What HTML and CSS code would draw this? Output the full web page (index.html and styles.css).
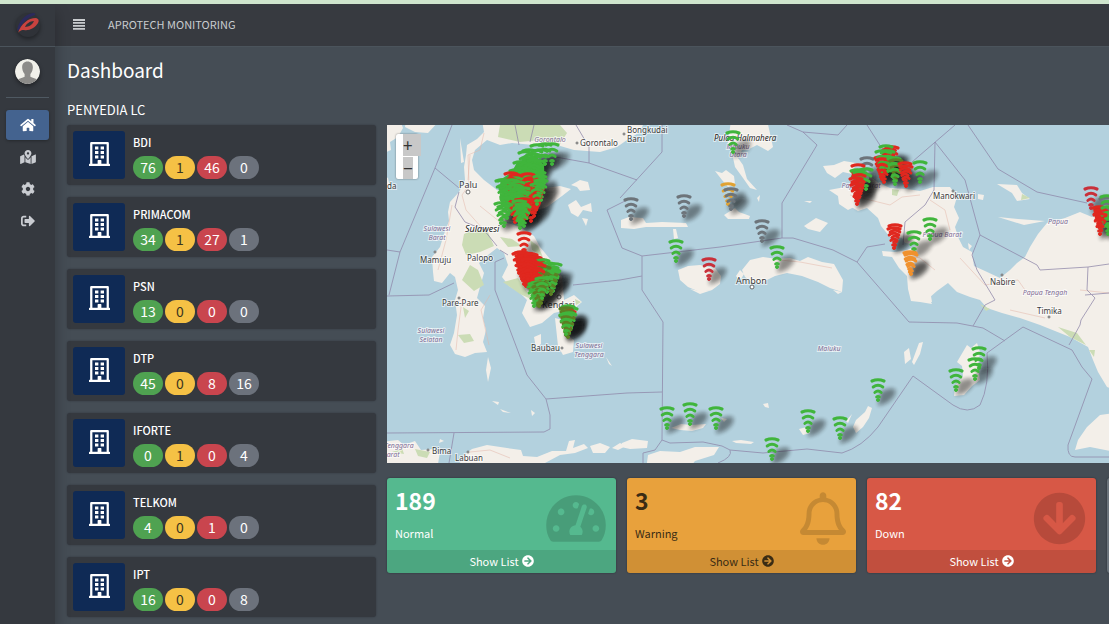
FILE: index.html
```html
<!DOCTYPE html>
<html lang="id">
<head>
<meta charset="UTF-8">
<meta name="viewport" content="width=device-width, initial-scale=1">
<title>Aprotech Monitoring</title>
<link rel="stylesheet" href="styles.css">
</head>
<body>

<svg class="sprite" aria-hidden="true">
  <symbol id="i-building" viewBox="0 0 448 512">
    <path fill-rule="evenodd" d="M24 24Q24 0 48 0H400Q424 0 424 24V464H436Q448 464 448 476V512H0V476Q0 464 12 464H24ZM72 48V464H184V396Q184 384 196 384H252Q264 384 264 396V464H376V48Z"/>
    <path d="M128 96h72v64h-72zM248 96h72v64h-72zM128 192h72v64h-72zM248 192h72v64h-72zM128 288h72v64h-72zM248 288h72v64h-72z"/>
  </symbol>
  <symbol id="i-arrow" viewBox="0 0 512 512">
    <path d="M256 8c137 0 248 111 248 248S393 504 256 504 8 393 8 256 119 8 256 8zm-28.900 143.600l75.500 72.400H120c-13.300 0-24 10.700-24 24v16c0 13.300 10.700 24 24 24h182.600l-75.500 72.400c-9.700 9.300-9.900 24.800-.4 34.300l11 10.900c9.400 9.400 24.600 9.400 33.900 0L404.300 273c9.400-9.400 9.400-24.600 0-33.900L271.600 106.300c-9.400-9.400-24.600-9.400-33.900 0l-11 10.900c-9.500 9.600-9.300 25.100.4 34.400z"/>
  </symbol>
</svg>

<div class="wrapper">
  <aside class="sidebar">
    <a href="#" class="brand" aria-label="Aprotech">
      <svg viewBox="0 0 26 26" width="26" height="26">
        <circle cx="13" cy="13" r="12" fill="#2f3238"/>
        <path d="M2 19C3 10 10 2 18 1Q21 1 20 3C13 5 7 11 5 17Z" fill="#2b2a5c"/>
        <path fill-rule="evenodd" d="M3 21C6 12 13 6 21 6Q25 7 23 11C20 16 14 19 9 18C5 18 4 20 3 21ZM10 15C14 15 18 12 19 9C15 9 11 12 10 15Z" fill="#c8423f"/>
      </svg>
    </a>
    <div class="user">
      <svg viewBox="0 0 26 26" width="25" height="25">
        <clipPath id="face"><circle cx="13" cy="13" r="13"/></clipPath>
        <g clip-path="url(#face)">
          <path fill="#f1f0ea" d="M0 0h26v26H0z"/>
          <path fill="#8c8b89" d="M13 2.500c4 0 6 3 5.500 7-.3 3-1.500 5-2.500 6v3c2 1 6 1.500 8 4v4H2v-4c2-2.500 6-3 8-4v-3c-1-1-2.200-3-2.500-6-.5-4 1.500-7 5.500-7z"/>
        </g>
      </svg>
    </div>
    <nav class="menu">
      <a href="#" class="active" aria-label="Dashboard"><svg viewBox="0 0 576 512" width="16" height="14"><path d="M280.370 148.260L96 300.110V464a16 16 0 0 0 16 16l112.060-.29a16 16 0 0 0 15.920-16V368a16 16 0 0 1 16-16h64a16 16 0 0 1 16 16v95.640a16 16 0 0 0 16 16.050L464 480a16 16 0 0 0 16-16V300L295.670 148.260a12.190 12.190 0 0 0-15.300 0zM571.600 251.470L488 182.560V44.050a12 12 0 0 0-12-12h-56a12 12 0 0 0-12 12v72.610L318.470 43a48 48 0 0 0-61 0L4.340 251.470a12 12 0 0 0-1.600 16.900l25.500 31A12 12 0 0 0 45.150 301l235.220-193.740a12.190 12.190 0 0 1 15.300 0L530.900 301a12 12 0 0 0 16.900-1.600l25.500-31a12 12 0 0 0-1.700-16.930z"/></svg></a>
      <a href="#" aria-label="Map"><svg viewBox="0 0 576 512" width="16" height="14"><path d="M288 0c-69.590 0-126 56.410-126 126 0 56.260 82.350 158.800 113.900 196.020 6.390 7.540 17.820 7.540 24.200 0C331.650 284.800 414 182.260 414 126 414 56.410 357.590 0 288 0zm0 168c-23.200 0-42-18.800-42-42s18.800-42 42-42 42 18.800 42 42-18.800 42-42 42zM20.120 215.950A32.006 32.006 0 0 0 0 245.660v250.320c0 11.320 11.430 19.060 21.940 14.860L160 448V214.920c-8.840-15.980-16.070-31.540-21.250-46.420L20.120 215.950zM288 359.670c-14.070 0-27.380-6.180-36.510-16.960-19.660-23.200-40.570-49.620-59.490-76.720v182l192 64V266c-18.920 27.090-39.820 53.520-59.490 76.720-9.130 10.770-22.440 16.950-36.510 16.950zm266.060-198.510L416 224v288l139.880-55.950A31.996 31.996 0 0 0 576 426.340V176.020c0-11.320-11.430-19.060-21.940-14.860z"/></svg></a>
      <a href="#" aria-label="Settings"><svg viewBox="0 0 512 512" width="14" height="14"><path d="M487.400 315.700l-42.600-24.600c4.300-23.200 4.300-47 0-70.200l42.600-24.600c4.900-2.800 7.100-8.600 5.500-14-11.100-35.600-30-67.800-54.700-94.600-3.800-4.100-10-5.100-14.800-2.300L380.800 110c-17.900-15.400-38.500-27.300-60.800-35.100V25.800c0-5.600-3.900-10.500-9.400-11.700-36.700-8.200-74.300-7.800-109.200 0-5.500 1.200-9.400 6.100-9.400 11.700V75c-22.200 7.900-42.800 19.800-60.800 35.100L88.700 85.500c-4.900-2.800-11-1.900-14.800 2.300-24.700 26.700-43.600 58.900-54.700 94.600-1.700 5.400.6 11.200 5.500 14L67.300 221c-4.300 23.200-4.300 47 0 70.200l-42.600 24.600c-4.900 2.800-7.100 8.600-5.500 14 11.100 35.600 30 67.800 54.700 94.600 3.800 4.100 10 5.100 14.800 2.300l42.600-24.600c17.900 15.400 38.500 27.300 60.800 35.100v49.200c0 5.600 3.900 10.500 9.400 11.700 36.700 8.200 74.300 7.800 109.200 0 5.500-1.200 9.400-6.100 9.400-11.700v-49.200c22.200-7.900 42.800-19.800 60.800-35.100l42.600 24.600c4.900 2.800 11 1.900 14.800-2.300 24.700-26.700 43.600-58.900 54.700-94.600 1.500-5.500-.7-11.300-5.600-14.100zM256 336c-44.100 0-80-35.900-80-80s35.900-80 80-80 80 35.900 80 80-35.900 80-80 80z"/></svg></a>
      <a href="#" aria-label="Logout"><svg viewBox="0 0 512 512" width="14" height="14"><path d="M497 273L329 441c-15 15-41 4.500-41-17v-96H152c-13.300 0-24-10.700-24-24v-96c0-13.300 10.700-24 24-24h136V88c0-21.400 25.900-32 41-17l168 168c9.300 9.400 9.300 24.600 0 34zM192 436v-40c0-6.600-5.400-12-12-12H96c-17.700 0-32-14.300-32-32V160c0-17.700 14.300-32 32-32h84c6.600 0 12-5.400 12-12V76c0-6.600-5.400-12-12-12H96c-53 0-96 43-96 96v192c0 53 43 96 96 96h84c6.600 0 12-5.400 12-12z"/></svg></a>
    </nav>
  </aside>

  <div class="page">
    <header class="navbar">
      <button class="toggle" aria-label="Toggle menu"><svg viewBox="0 0 12 12" width="12" height="12"><path d="M0 1h12v2H0zM0 4h12v1.800H0zM0 7h12v1.800H0zM0 10h12v1.800H0z"/></svg></button>
      <span>APROTECH MONITORING</span>
    </header>

    <main class="content">
      <h1>Dashboard</h1>
      <h2>PENYEDIA LC</h2>

      <div class="columns">
        <section class="providers">
          <div class="info-box">
            <div class="info-icon"><svg width="21" height="24"><use href="#i-building"/></svg></div>
            <div><div class="name">BDI</div><div class="badges"><span class="badge up">76</span><span class="badge warn">1</span><span class="badge down">46</span><span class="badge off">0</span></div></div>
          </div>
          <div class="info-box">
            <div class="info-icon"><svg width="21" height="24"><use href="#i-building"/></svg></div>
            <div><div class="name">PRIMACOM</div><div class="badges"><span class="badge up">34</span><span class="badge warn">1</span><span class="badge down">27</span><span class="badge off">1</span></div></div>
          </div>
          <div class="info-box">
            <div class="info-icon"><svg width="21" height="24"><use href="#i-building"/></svg></div>
            <div><div class="name">PSN</div><div class="badges"><span class="badge up">13</span><span class="badge warn">0</span><span class="badge down">0</span><span class="badge off">0</span></div></div>
          </div>
          <div class="info-box">
            <div class="info-icon"><svg width="21" height="24"><use href="#i-building"/></svg></div>
            <div><div class="name">DTP</div><div class="badges"><span class="badge up">45</span><span class="badge warn">0</span><span class="badge down">8</span><span class="badge off">16</span></div></div>
          </div>
          <div class="info-box">
            <div class="info-icon"><svg width="21" height="24"><use href="#i-building"/></svg></div>
            <div><div class="name">IFORTE</div><div class="badges"><span class="badge up">0</span><span class="badge warn">1</span><span class="badge down">0</span><span class="badge off">4</span></div></div>
          </div>
          <div class="info-box">
            <div class="info-icon"><svg width="21" height="24"><use href="#i-building"/></svg></div>
            <div><div class="name">TELKOM</div><div class="badges"><span class="badge up">4</span><span class="badge warn">0</span><span class="badge down">1</span><span class="badge off">0</span></div></div>
          </div>
          <div class="info-box">
            <div class="info-icon"><svg width="21" height="24"><use href="#i-building"/></svg></div>
            <div><div class="name">IPT</div><div class="badges"><span class="badge up">16</span><span class="badge warn">0</span><span class="badge down">0</span><span class="badge off">8</span></div></div>
          </div>
        </section>

        <section class="overview">
          <div class="map">
            <svg class="map-canvas" viewBox="387 125 722 338" preserveAspectRatio="xMinYMin slice" role="img" aria-label="Map of sites">
              <defs>
                <filter id="soft" x="-50%" y="-50%" width="200%" height="200%"><feGaussianBlur stdDeviation="2"/></filter>
                <path id="shadow" d="M0 28L2 15Q9 9 17 11Q20 17 9 25Z" filter="url(#soft)"/>
                <g id="wifi" fill="none" stroke="currentColor" stroke-linecap="round">
                  <path stroke-width="3.200" d="M-6 3Q0 .5 6 3"/>
                  <path stroke-width="3" d="M-4.800 9Q0 5.500 4.800 9"/>
                  <path stroke-width="2.800" d="M-3.200 14.500Q0 11.500 3.200 14.500"/>
                  <path stroke-width="2.600" d="M-1.500 19Q0 17.500 1.500 19"/>
                  <circle cx="0" cy="22" r="1.500" fill="currentColor" stroke-width="1"/>
                </g>
              </defs>

              <g class="land">
                <!-- Sulawesi -->
                <path d="M482 120L484 132 477 139 467 145 466 155 464 167 465 180 459 192 450 202 448 212 449 221 444 234 440 247 432 257 433 272 434 281 442 283 450 273 455 277 458 290 455 300 457 315 454 333 450 345 455 354 465 357 475 353 487 352 483 342 486 330 483 318 485 306 477 298 480 287 484 273 479 263 488 255 497 248 504 253 508 265 502 277 509 286 519 292 527 300 522 313 530 327 542 323 554 313 567 310 576 307 582 302 574 295 564 300 563 288 562 277 550 259 540 247 534 236 520 227 505 222 520 222 535 212 547 207 562 196 571 189 560 186 545 188 527 192 510 196 497 190 484 180 474 170 472 160 475 150 487 140 500 145 512 143 534 145 550 143 574 150 600 152 617 147 627 140 640 132 645 120Z"/>
                <!-- Kalimantan coast -->
                <path d="M380 120H400L403 128 398 137 390 142 391 150 380 155ZM406 120H440L428 133 415 132 405 127ZM380 174L388 178 390 187 380 195Z"/>
                <!-- Banggai, Buton, Muna, Selayar -->
                <path d="M571 185L580 180 588 182 590 190 580 191 577 187ZM568 205L576 200 581 207 591 203 592 212 583 210 578 217 571 213ZM582 218L588 219 586 226ZM555 318L563 320 568 335 574 340 573 352 563 355 558 346ZM534 337L541 334 541 344 536 348ZM488 357L491 368 488 382 486 370ZM606 357L612 366 609 364Z"/>
                <path d="M492 401L499 402 498 405ZM500 409L511 413 503 412ZM531 410L535 413 532 416ZM460 138L464 162 461 163Z"/>
                <!-- Nusa Tenggara and Timor -->
                <path d="M380 442L398 440 404 445 415 441 421 450 434 449 440 452 437 470H380ZM456 470L464 455 472 449 487 445 507 448 521 450 523 456 537 457 552 451 566 451 569 441 575 440 573 448 584 444 588 448 575 453 560 455 545 463 530 470ZM590 446L600 443 610 447 605 453 593 453ZM612 448L620 443 626 446 618 450ZM622 443L632 439 648 441 647 448 630 449 621 447ZM646 470L648 455 660 451 680 452 695 447 719 447 714 455 695 461 688 470ZM440 439L444 441 439 443Z"/>
                <path d="M671 428L681 424 691 425 706 424 703 428 692 431 680 430ZM732 441L741 440 754 442 751 444 736 443ZM799 429L807 427 810 433 803 435ZM721 418L727 419 724 422ZM763 404L768 403 769 408 765 407ZM853 427L856 420 865 412 868 406 872 408 869 418 863 427 856 433ZM846 421L852 414 848 423Z"/>
                <!-- Halmahera, Bacan, Obi -->
                <path d="M731 120H767L773 147 768 151 757 145 749 149 742 150 738 158 743 165 747 179 757 190 750 188 743 178 735 167 732 153 728 143ZM715 171L722 173 726 170 734 176 735 184 728 187 722 180ZM724 215L735 208 739 212 750 216 749 219 728 219ZM757 198L760 195 759 202Z"/>
                <!-- Sula -->
                <path d="M621 220L629 217 643 218 646 223 662 222 686 223 688 227 646 227 634 229 621 228ZM673 229L676 229 678 238 674 239Z"/>
                <!-- Buru, Seram, Ambon -->
                <path d="M678 270L688 266 700 265 715 268 721 276 720 284 712 290 700 292 688 287 680 280ZM736 276L740 270 744 274 740 281ZM745 277L742 270 750 260 763 257 777 259 790 258 800 261 808 257 822 262 834 264 843 280 842 292 830 288 818 282 802 276 787 273 775 276 763 282 753 283Z"/>
                <!-- Raja Ampat, Misool -->
                <path d="M823 166L834 165 844 161 856 163 852 174 843 172 835 178 827 173ZM829 190L845 187 858 195 856 206 848 210 839 204 838 196ZM804 226L816 218 828 223 820 232 808 229ZM804 201L812 201 810 203Z"/>
                <!-- Papua -->
                <path d="M848 205L855 186 867 173 877 182 890 188 907 189 920 191 933 187 950 187 957 197 954 207 959 218 955 227 958 237 963 247 972 252 974 266 985 271 1000 278 1010 270 1017 263 1025 257 1030 247 1038 234 1047 223 1065 218 1080 212 1092 217 1102 214 1115 222V390L1107 387 1098 372 1093 360 1088 347 1070 337 1055 331 1040 325 1020 318 1002 313 987 308 980 300 970 297 957 292 948 283 937 291 929 298 932 304 920 302 911 301 908 289 907 276 899 268 892 257 883 256 882 251 895 252 907 250 918 245 905 243 902 238 890 237 881 226 878 218 867 208 858 211Z"/>
                <path d="M997 184L1017 185 1022 193 1030 199 1017 201 1012 193ZM998 217L1018 219 1045 221 1024 225ZM978 194L984 195 983 200 978 199ZM968 243L972 246 969 250Z"/>
                <path d="M957 362L967 345 971 348 977 343 980 352 978 366 980 380 972 386 964 395 954 396 955 386 963 376 962 366ZM904 352L909 348 911 359 905 364ZM912 362L919 343 923 342 920 354 914 365ZM1075 450L1078 440 1087 427 1100 415 1115 413V452L1090 447Z"/>
                <path d="M690 289L700 291 712 290 700 294ZM833 290L842 292 838 294ZM910 290L930 290 932 302 912 300Z"/>
              </g>

              <g class="forest">
                <path d="M500 125H560L567 133 560 144 540 140 520 142 498 137ZM464 234L475 229 488 232 494 246 480 252 466 255 462 245ZM500 237L512 239 522 246 508 247ZM470 265L478 270 484 285 474 291 462 280ZM503 282L518 278 526 290 533 300 520 294ZM530 240L538 246 543 257 532 250ZM463 307L469 311 465 318ZM458 335L470 334 474 341 464 343ZM415 449L430 452 427 458 418 456ZM392 452L402 448 404 454ZM892 189L899 190 897 196 892 195ZM1022 194L1030 198 1021 200ZM1058 327L1077 333 1086 345 1070 337ZM1089 350L1095 350 1094 357ZM980 304L990 309 986 311ZM575 299L581 302 576 305Z"/>
              </g>
              <g class="road">
                <path d="M484 133L480 150 468 155 469 185 462 195 466 210 482 228M438 270L446 240 452 205M462 300L458 330 456 350M470 155L468 180M500 222L480 206M490 295L481 310 489 345M470 452L490 450 510 458M850 195L870 200 890 205 902 197 920 195M930 200L945 210 950 230M960 258L985 285 1018 280 1025 290M1010 310L1045 318M1080 290L1109 293M905 255L920 258 935 270M780 260L800 262 832 268"/>
              </g>
              <g class="border">
                <path d="M452 125L435 168 400 252 389 295M435 168L459 188M387 250L400 252M387 296L429 295 454 283M459 192L455 207 465 222 484 230 497 246M500 250L508 255M515 125L519 145M534 125L530 142M576 125L589 147V163M539 154L589 163 637 180M620 198L662 152V125M627 200L607 210 622 248 642 256V290L663 322 662 440M642 256L720 247 782 238 793 238 833 250 857 262 890 300 909 322 957 323 983 328 1005 341M620 280L642 276M573 285L620 280M782 238V203L817 145 803 132 787 125M803 132L838 135 847 125M867 125L883 150M955 125L912 162M935 142L934 190 925 205 905 222 903 245M935 142L965 180 980 235 1037 265 1040 270 1088 267 1087 290 1095 298 1081 320 1080 325 1069 345M980 235L972 255 977 270 995 300 985 305 973 326M968 125L998 169 1037 192 1087 203M857 262L867 247 885 244M1088 267L1109 264M1085 295L1109 293M495 262V290L510 330 527 375 546 399 550 415V429L544 432 387 433M495 262L504 258M546 399L627 393 662 392M454 433L449 463"/>
                <path d="M662 440L670 443 703 442 722 446 730 450 763 453 807 449 842 453Q862 447 878 427L913 376 953 405Q968 415 980 405Q990 385 987 353L1023 327 1072 350 1082 367 1092 379 1068 445Q1067 457 1075 457H1109M662 440L655 450 643 453V463M730 450Q733 457 718 463"/>
              </g>

              <g class="town">
                <text x="459" y="188" class="big">Palu</text><circle cx="468" cy="192" r="2"/>
                <text x="465" y="232" class="big dark">Sulawesi</text>
                <text x="580" y="146">Gorontalo</text><circle cx="577" cy="143" r="1"/>
                <text x="627" y="133">Bongkudai</text><text x="627" y="142">Baru</text><circle cx="624" cy="134" r="1"/>
                <text x="420" y="263">Mamuju</text><circle cx="435" cy="252" r="1"/>
                <text x="467" y="261">Palopo</text>
                <text x="442" y="306">Pare-Pare</text><circle cx="459" cy="298" r="1"/>
                <text x="531" y="351">Baubau</text><circle cx="562" cy="348" r="1"/>
                <text x="542" y="308" class="big">Kendari</text><circle cx="559" cy="297" r="2"/>
                <text x="432" y="454">Bima</text><circle cx="428" cy="450" r="1"/>
                <text x="455" y="461">Labuan</text><circle cx="468" cy="452" r="1"/>
                <text x="387" y="189">da</text>
                <text x="736" y="284" class="big">Ambon</text><circle cx="752" cy="287" r="2"/>
                <text x="714" y="141" class="dark">Pulau Halmahera</text>
                <text x="933" y="199">Manokwari</text><circle cx="953" cy="191" r="1"/>
                <text x="990" y="285">Nabire</text><circle cx="1002" cy="275" r="1"/>
                <text x="1037" y="314">Timika</text><circle cx="1049" cy="317" r="1"/>
              </g>
              <g class="region">
                <text x="550" y="142">Gorontalo</text>
                <text x="437" y="231">Sulawesi</text><text x="437" y="240">Barat</text>
                <text x="431" y="333">Sulawesi</text><text x="431" y="342">Selatan</text>
                <text x="589" y="348">Sulawesi</text><text x="589" y="357">Tenggara</text>
                <text x="738" y="149">Maluku</text><text x="738" y="157">Utara</text>
                <text x="829" y="351">Maluku</text>
                <text x="861" y="188">Papua Barat</text>
                <text x="942" y="237">Papua Barat</text>
                <text x="1058" y="224">Papua</text>
                <text x="1045" y="295">Papua Tengah</text>
                <text x="399" y="448">Tenggara</text><text x="391" y="457">Barat</text>
              </g>

              <g id="shadows"></g>
              <!-- solid cores of the crowded clusters -->
              <path fill="#40b53c" d="M517 162L535 155 544 165 545 186 536 200 528 218 519 226 513 210 502 196 500 180 512 172Z"/>
              <path fill="#cf2a20" d="M533 187L545 188 540 206 531 215ZM516 251L532 252 546 262 546 281 528 284Z"/>
              <path fill="#cf2a20" d="M851 172H866L859 198ZM880 150H897L888 172ZM1093 208H1107L1101 230Z"/>
              <path fill="#4f8a24" d="M528 284H547L537 308ZM560 308H575L567 334Z"/>
              <g id="markers"></g>
            </svg>
            <div class="zoom-control">
              <button class="zoom-in" aria-label="Zoom in">+</button>
              <button class="zoom-out" aria-label="Zoom out">−</button>
            </div>
          </div>

          <div class="stats">
            <div class="small-box green">
              <div class="inner"><strong>189</strong><p>Normal</p></div>
              <svg class="box-icon" viewBox="0 0 576 512" width="60" height="53"><path d="M288 32C128.940 32 0 160.940 0 320c0 52.800 14.250 102.260 39.060 144.800 5.610 9.620 16.300 15.200 27.440 15.200h443c11.140 0 21.830-5.580 27.440-15.200C561.750 422.260 576 372.800 576 320c0-159.060-128.940-288-288-288zm0 64c14.710 0 26.580 10.130 30.320 23.650-1.110 2.260-2.640 4.230-3.450 6.670l-9.220 27.670c-5.130 3.490-10.970 6.010-17.640 6.010-17.670 0-32-14.330-32-32S270.330 96 288 96zM96 384c-17.670 0-32-14.330-32-32s14.330-32 32-32 32 14.330 32 32-14.330 32-32 32zm48-160c-17.670 0-32-14.330-32-32s14.330-32 32-32 32 14.330 32 32-14.330 32-32 32zm246.770-72.410l-61.330 184C343.130 347.330 352 364.540 352 384c0 11.720-3.380 22.550-8.880 32H232.880c-5.500-9.450-8.880-20.280-8.880-32 0-33.940 26.500-61.430 59.900-63.590l61.340-184.010c4.170-12.560 17.730-19.450 30.360-15.170 12.570 4.190 19.350 17.790 15.170 30.360zm14.660 57.200l15.520-46.550c3.470-1.290 7.130-2.230 11.050-2.230 17.670 0 32 14.330 32 32s-14.330 32-32 32c-11.380-.01-20.890-6.280-26.570-15.220zM480 384c-17.670 0-32-14.330-32-32s14.330-32 32-32 32 14.330 32 32-14.330 32-32 32z"/></svg>
              <a href="#" class="more">Show List <svg width="12" height="12"><use href="#i-arrow"/></svg></a>
            </div>
            <div class="small-box orange">
              <div class="inner"><strong>3</strong><p>Warning</p></div>
              <svg class="box-icon" viewBox="0 0 448 512" width="46" height="53"><path d="M439.390 362.290c-19.320-20.760-55.470-51.990-55.470-154.290 0-77.700-54.480-139.900-127.940-155.160V32c0-17.670-14.320-32-31.980-32s-31.980 14.330-31.980 32v20.840C118.560 68.100 64.080 130.300 64.080 208c0 102.300-36.150 133.530-55.470 154.290-6 6.450-8.660 14.160-8.610 21.710.11 16.400 12.980 32 32.100 32h383.800c19.120 0 32-15.600 32.100-32 .05-7.550-2.610-15.270-8.610-21.710zM67.530 368c21.220-27.970 44.420-74.330 44.530-159.420 0-.2-.06-.38-.06-.58 0-61.860 50.140-112 112-112s112 50.140 112 112c0 .2-.06.38-.06.58.11 85.100 23.310 131.460 44.530 159.420H67.530zM224 512c35.320 0 63.970-28.650 63.970-64H160.030c0 35.350 28.650 64 63.970 64z"/></svg>
              <a href="#" class="more">Show List <svg width="12" height="12"><use href="#i-arrow"/></svg></a>
            </div>
            <div class="small-box red">
              <div class="inner"><strong>82</strong><p>Down</p></div>
              <svg class="box-icon" viewBox="0 0 512 512" width="53" height="53"><use href="#i-arrow" width="512" height="512" transform="rotate(90 256 256)"/></svg>
              <a href="#" class="more">Show List <svg width="12" height="12"><use href="#i-arrow"/></svg></a>
            </div>
            <div class="small-box gray"></div>
          </div>
        </section>
      </div>
    </main>
  </div>
</div>

<script>
// site markers: [status, x, y] where x,y is the top centre of the icon
const colors = { g: "#40b53c", r: "#e0281f", d: "#c9303a", o: "#f0912e", y: "#e0a233", k: "#6d747a", b: "#5c7f24" };

const sites = [
  // single sites
  ["k",631,197],["k",684,194],["y",728,182],["k",731,187],["k",762,219],["g",676,239],["g",777,245],["d",709,257],["g",733,130],
  ["g",667,406],["g",690,402],["g",716,406],["g",808,409],["g",840,416],["g",772,437],["g",878,378],["g",956,368],["g",979,346],["g",975,357],
  // Gorontalo / Palu
  ["g",552,142],["g",545,142],["g",537,143],["g",529,148],["g",541,148],["g",533,152],["g",525,150],["g",529,156],["g",520,160],["g",526,162],
  ["g",531,163],["g",523,166],["g",534,158],["g",539,170],["g",516,168],["r",511,171],["r",516,173],["r",528,172],["r",531,176],
  ["g",540,174],["g",541,178],["g",504,178],["g",508,181],["g",506,186],["g",502,178],["r",522,182],["r",536,188],["r",534,194],["r",531,199],["r",526,196],
  ["g",537,182],["g",512,178],["g",515,183],["g",519,188],["g",510,187],["g",512,192],["g",518,180],["g",523,186],["g",524,190],["g",515,194],
  ["g",501,201],["g",504,204],["r",515,200],["r",517,198],["g",507,196],["r",524,197],["g",519,199],["g",522,202],["g",524,204],["g",520,206],
  // Kendari
  ["r",524,231],["r",521,250],["r",522,253],["r",519,251],["r",525,254],["r",527,256],["r",530,255],["r",535,255],["r",538,257],["g",543,258],["g",548,261],
  ["g",555,262],["g",552,265],["g",553,269],["b",551,272],["g",547,270],["b",544,265],["r",522,257],["r",525,259],["r",528,261],["r",532,260],["r",536,261],["r",539,263],
  ["r",526,264],["r",530,266],["r",534,266],["r",537,268],["g",535,281],["g",538,280],["b",541,281],["g",534,284],["b",539,284],["g",542,276],
  ["r",531,252],["r",524,262],["r",528,257],
  ["g",568,304],["g",571,306],["b",566,306],["r",569,309],["b",567,309],["g",569,311],["b",566,313],["b",568,315],["g",566,312],
  // Sorong and Papua Barat
  ["k",867,156],["g",866,167],["r",858,163],["g",857,168],["g",860,170],["r",859,173],["r",856,176],["r",858,179],["r",857,182],
  ["r",892,145],["r",889,147],["r",881,155],["r",883,157],["r",884,160],["g",886,144],["g",888,149],["g",882,149],["r",882,157],["g",894,156],["b",896,158],["g",895,162],
  ["r",905,161],["r",906,164],["g",920,160],["g",930,217],["r",895,223],["r",894,226],["g",914,230],["o",910,250],["o",911,252],
  ["d",1091,186],["k",1106,196],["g",1107,194],["r",1099,205],["r",1101,208],["g",1108,205],["g",1108,212],["r",1100,212]
];

document.getElementById("shadows").innerHTML = sites.map(([, x, y]) => `<use href="#shadow" x="${x}" y="${y}"/>`).join("");
document.getElementById("markers").innerHTML = sites.map(([s, x, y]) => `<use href="#wifi" x="${x}" y="${y}" color="${colors[s]}"/>`).join("");
</script>
</body>
</html>
```
FILE: styles.css
```css
* { box-sizing:border-box; }
body { margin:0; background:#454d55; color:#fff; font-family:"Noto Sans CJK SC", "Noto Sans", sans-serif; font-size:11px; line-height:14px; border-top:4px solid #cfe5cd; }
h1, h2, p { margin:0; font-weight:400; }
a { color:inherit; text-decoration:none; }
button { font-family:inherit; border:none; padding:0; cursor:pointer; }
svg { fill:currentColor; }
.sprite { position:absolute; width:0; height:0; }

.wrapper { display:flex; min-height:calc(100vh - 4px); overflow:hidden; }
.page { flex:1; min-width:0; }

/* sidebar */
.sidebar { flex:0 0 55px; background:#35393f; color:#c9ccd1; box-shadow:0 8px 14px rgba(0,0,0,.3); position:relative; }
.brand { display:flex; align-items:center; justify-content:center; height:43px; border-bottom:1px solid #4b545c; }
.brand svg { filter:drop-shadow(0 2px 2px rgba(0,0,0,.4)); }
.user { display:flex; justify-content:center; margin:0 6px 12px; padding:12px 0 13px; border-bottom:1px solid #4f5962; }
.user svg { border-radius:50%; box-shadow:0 2px 4px rgba(0,0,0,.4); }
.menu { display:flex; flex-direction:column; gap:2px; padding:0 6px; }
.menu a { display:flex; align-items:center; justify-content:center; height:30px; border-radius:3px; }
.menu a.active { background:#44638f; color:#fff; box-shadow:0 1px 3px rgba(0,0,0,.3); }

/* top bar */
.navbar { display:flex; align-items:center; gap:23px; height:43px; padding:0 18px 2px; background:#373a40; color:#c9cccf; border-bottom:1px solid #4b545c; }
.toggle { display:flex; background:none; color:inherit; }

.content { padding:0 0 0 12px; }
h1 { font-size:19px; line-height:26px; padding:10px 0 12px; }
h2 { font-size:13px; line-height:20px; padding:5px 0; }
.columns { display:flex; align-items:flex-start; gap:11px; }

/* provider list */
.providers { flex:0 0 309px; display:flex; flex-direction:column; gap:12px; }
.info-box { display:flex; gap:8px; padding:6px; height:60px; background:#35393f; border-radius:3px; box-shadow:0 0 2px rgba(0,0,0,.3); }
.info-icon { display:flex; align-items:center; justify-content:center; width:52px; padding-bottom:2px; background:#0f2a55; border-radius:3px; }
.name { padding-top:4px; margin-bottom:7px; font-weight:500; }
.badges { display:flex; gap:2px; }
.badge { width:30px; height:23px; border-radius:12px; font-size:14px; line-height:23px; text-align:center; }
.up { background:#4fa251; }
.warn { background:#f5c145; color:#3b3620; }
.down { background:#c9454e; }
.off { background:#6c727c; }

/* map */
.overview { flex:1; min-width:0; }
.map { position:relative; height:338px; margin-bottom:15px; background:#b3d1de; overflow:hidden; }
.map-canvas { display:block; width:100%; height:100%; }
.land { fill:#f3efe9; }
.forest { fill:#cbdcb5; }
.road { fill:none; stroke:#e3b5a8; stroke-width:1; opacity:.5; }
.border { fill:none; stroke:#8e86a8; stroke-width:1; opacity:.75; }
.town text, .region text { font-family:"Noto Sans", sans-serif; font-size:8px; paint-order:stroke; stroke:#fff; stroke-width:2px; stroke-opacity:.6; }
.town text { fill:#3c3c3c; }
.town .big { font-size:9px; }
.town .dark { font-style:italic; fill:#222; }
.town circle { fill:#fff; stroke:#666; }
.region text { fill:#7e6c94; font-size:7px; font-style:italic; text-anchor:middle; }
#shadows { fill:#111; opacity:.95; }
#shadows use { opacity:.45; }

.zoom-control { position:absolute; left:9px; top:9px; width:22px; border-radius:2px; background:#fff; box-shadow:0 0 2px rgba(0,0,0,.5); }
.zoom-control button { display:block; height:22px; margin-left:7px; font-size:17px; line-height:20px; color:#333; background:#c8c8c8; }
.zoom-in { width:18px; padding-right:9px; margin-bottom:1px; }
.zoom-out { width:10px; }

/* summary boxes */
.stats { display:grid; grid-template-columns:repeat(4, minmax(229px, 1fr)); gap:11px; }
.small-box { position:relative; border-radius:3px; overflow:hidden; box-shadow:0 0 2px rgba(0,0,0,.4); }
.inner { height:72px; padding:7px 8px; }
.inner strong { display:block; font-size:23px; line-height:30px; margin-bottom:11px; }
.box-icon { position:absolute; right:10px; top:14px; color:rgba(0,0,0,.15); }
.more { display:flex; align-items:center; justify-content:center; gap:3px; height:23px; padding-bottom:2px; background:rgba(0,0,0,.1); }
.green { background:#55b98f; }
.orange { background:#e8a13c; color:#3a2c14; }
.red { background:#d75846; }
.gray { background:#6c757d; }
```
